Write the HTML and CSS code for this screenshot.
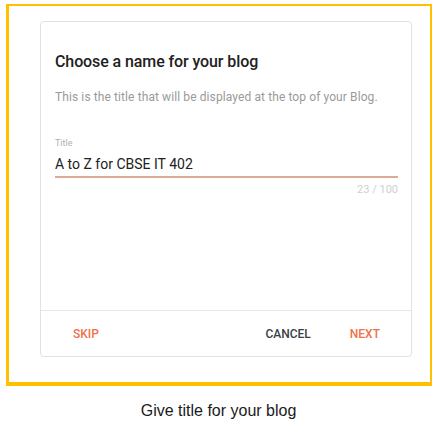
FILE: index.html
```html
<!DOCTYPE html>
<html>
<head>
<meta charset="utf-8">
<link rel="stylesheet" href="styles.css">
</head>
<body>
<div class="frame">
  <div class="card">
    <div class="card-body">
      <div class="heading">Choose a name for your blog</div>
      <div class="sub">This is the title that will be displayed at the top of your Blog.</div>
      <div class="label">Title</div>
      <div class="input">A to Z for CBSE IT 402</div>
      <div class="counter">23 / 100</div>
    </div>
    <div class="card-footer">
      <span class="btn accent">SKIP</span>
      <span class="spacer"></span>
      <span class="btn dark">CANCEL</span>
      <span class="btn accent">NEXT</span>
    </div>
  </div>
</div>
<div class="caption">Give title for your blog</div>
</body>
</html>
```
FILE: styles.css
```css
html, body {
  margin: 0;
  padding: 0;
  background: #ffffff;
}
body {
  width: 437px;
  height: 425px;
  overflow: hidden;
}
.frame {
  box-sizing: border-box;
  margin: 4px 0 0 6px;
  width: 426px;
  height: 382px;
  border-style: solid;
  border-color: #ffc000;
  border-width: 2px 2px 4px 3px;
  padding: 15px 0 0 31px;
  background: #fff;
}
.card {
  box-sizing: border-box;
  width: 372px;
  height: 336px;
  border: 1px solid #e2e2e2;
  border-radius: 4px;
  background: #fff;
  display: flex;
  flex-direction: column;
  font-family: Roboto, "Noto Sans", sans-serif;
}
.card-body {
  flex: 1;
  padding: 30px 13px 0 14px;
  display: flex;
  flex-direction: column;
}
.heading {
  font-size: 16px;
  line-height: 20px;
  font-weight: 500;
  color: #212121;
  letter-spacing: -0.1px;
}
.sub {
  margin-top: 18px;
  font-size: 12px;
  line-height: 14px;
  letter-spacing: 0.1px;
  color: #9a9a9a;
}
.label {
  margin-top: 33px;
  font-size: 9px;
  line-height: 12px;
  color: #b0b0b0;
}
.input {
  margin-top: 6px;
  font-size: 14px;
  line-height: 18px;
  color: #212121;
  padding-bottom: 3px;
  border-bottom: 2px solid #dcab94;
}
.counter {
  margin-top: 6px;
  font-size: 11px;
  line-height: 12px;
  color: #cfcfcf;
  text-align: right;
}
.card-footer {
  border-top: 1px solid #e6e6e6;
  padding: 15px 31px 14px 32px;
  display: flex;
  align-items: center;
  gap: 39px;
}
.spacer {
  flex: 1;
}
.btn {
  font-size: 12px;
  line-height: 16px;
  font-weight: 500;
}
.accent {
  color: #f2704a;
}
.dark {
  color: #3c4043;
}
.card-footer .spacer + .btn {
  margin-left: -39px;
}
.caption {
  margin-top: 16px;
  text-align: center;
  font-family: "Liberation Sans", Arial, sans-serif;
  font-size: 16px;
  line-height: 18px;
  color: #1a1a1a;
}
```
